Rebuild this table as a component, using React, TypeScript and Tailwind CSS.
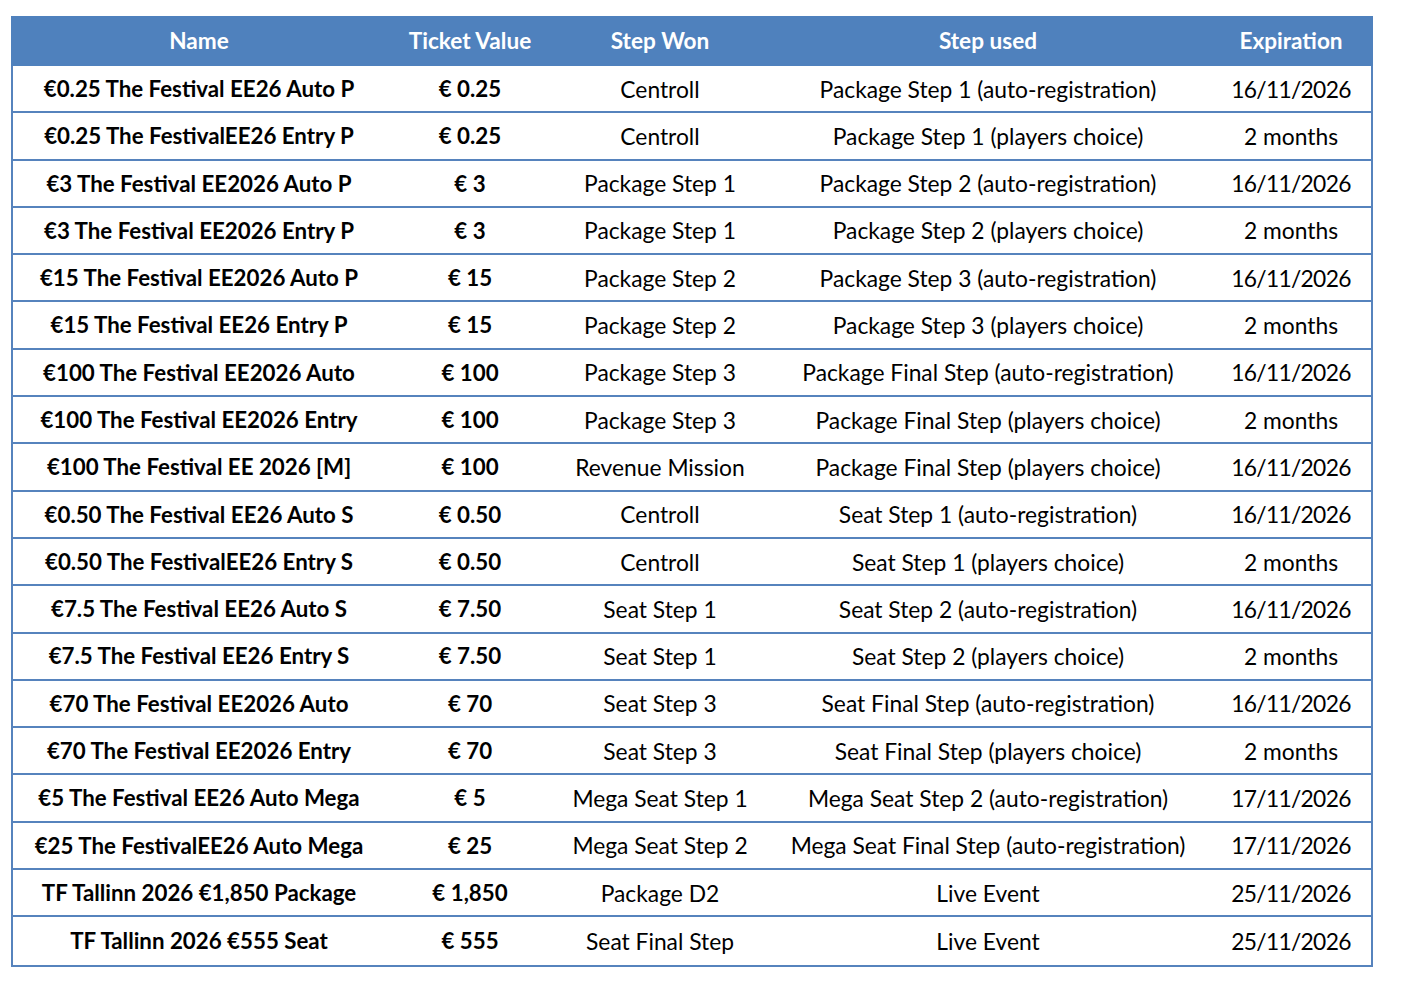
const rows: [string, string, string, string, string][] = [
  ['€0.25 The Festival EE26 Auto P', '€ 0.25', 'Centroll', 'Package Step 1 (auto-registration)', '16/11/2026'],
  ['€0.25 The FestivalEE26 Entry P', '€ 0.25', 'Centroll', 'Package Step 1 (players choice)', '2 months'],
  ['€3 The Festival EE2026 Auto P', '€ 3', 'Package Step 1', 'Package Step 2 (auto-registration)', '16/11/2026'],
  ['€3 The Festival EE2026 Entry P', '€ 3', 'Package Step 1', 'Package Step 2 (players choice)', '2 months'],
  ['€15 The Festival EE2026 Auto P', '€ 15', 'Package Step 2', 'Package Step 3 (auto-registration)', '16/11/2026'],
  ['€15 The Festival EE26 Entry P', '€ 15', 'Package Step 2', 'Package Step 3 (players choice)', '2 months'],
  ['€100 The Festival EE2026 Auto', '€ 100', 'Package Step 3', 'Package Final Step (auto-registration)', '16/11/2026'],
  ['€100 The Festival EE2026 Entry', '€ 100', 'Package Step 3', 'Package Final Step (players choice)', '2 months'],
  ['€100 The Festival EE 2026 [M]', '€ 100', 'Revenue Mission', 'Package Final Step (players choice)', '16/11/2026'],
  ['€0.50 The Festival EE26 Auto S', '€ 0.50', 'Centroll', 'Seat Step 1 (auto-registration)', '16/11/2026'],
  ['€0.50 The FestivalEE26 Entry S', '€ 0.50', 'Centroll', 'Seat Step 1 (players choice)', '2 months'],
  ['€7.5 The Festival EE26 Auto S', '€ 7.50', 'Seat Step 1', 'Seat Step 2 (auto-registration)', '16/11/2026'],
  ['€7.5 The Festival EE26 Entry S', '€ 7.50', 'Seat Step 1', 'Seat Step 2 (players choice)', '2 months'],
  ['€70 The Festival EE2026 Auto', '€ 70', 'Seat Step 3', 'Seat Final Step (auto-registration)', '16/11/2026'],
  ['€70 The Festival EE2026 Entry', '€ 70', 'Seat Step 3', 'Seat Final Step (players choice)', '2 months'],
  ['€5 The Festival EE26 Auto Mega', '€ 5', 'Mega Seat Step 1', 'Mega Seat Step 2 (auto-registration)', '17/11/2026'],
  ['€25 The FestivalEE26 Auto Mega', '€ 25', 'Mega Seat Step 2', 'Mega Seat Final Step (auto-registration)', '17/11/2026'],
  ['TF Tallinn 2026 €1,850 Package', '€ 1,850', 'Package D2', 'Live Event', '25/11/2026'],
  ['TF Tallinn 2026 €555 Seat', '€ 555', 'Seat Final Step', 'Live Event', '25/11/2026'],
];

const headers = ['Name', 'Ticket Value', 'Step Won', 'Step used', 'Expiration'];
const cols = 'grid grid-cols-[376px_166px_214px_442px_164px]';

export default function App() {
  return (
    <div className="min-h-[990px] bg-white pt-4 pl-[11px]" style={{ fontFamily: 'Lato, "Noto Sans", sans-serif' }}>
      <div className="w-[1362px] border-2 border-t-0 border-[#5683bd]">
        <div className={`${cols} h-[50px] bg-[#4f81bd] text-[22.6px] font-bold text-white -mx-[2px] w-[1362px]`}>
          {headers.map((h) => (
            <div key={h} className="flex items-center justify-center">{h}</div>
          ))}
        </div>
        {rows.map((r, i) => (
          <div
            key={i}
            className={`${cols} -ml-[2px] h-[47.3px] text-black ${i < rows.length - 1 ? 'border-b-2 border-[#5683bd]' : ''}`}
          >
            {r.map((c, j) => (
              <div
                key={j}
                className={`flex items-center justify-center whitespace-nowrap ${
                  j < 2 ? 'font-bold text-[22.3px]' : 'text-[22.8px]'
                } ${j === 4 && c.includes('/') ? 'tracking-[-0.7px]' : ''}`}
              >
                {c}
              </div>
            ))}
          </div>
        ))}
      </div>
    </div>
  );
}
